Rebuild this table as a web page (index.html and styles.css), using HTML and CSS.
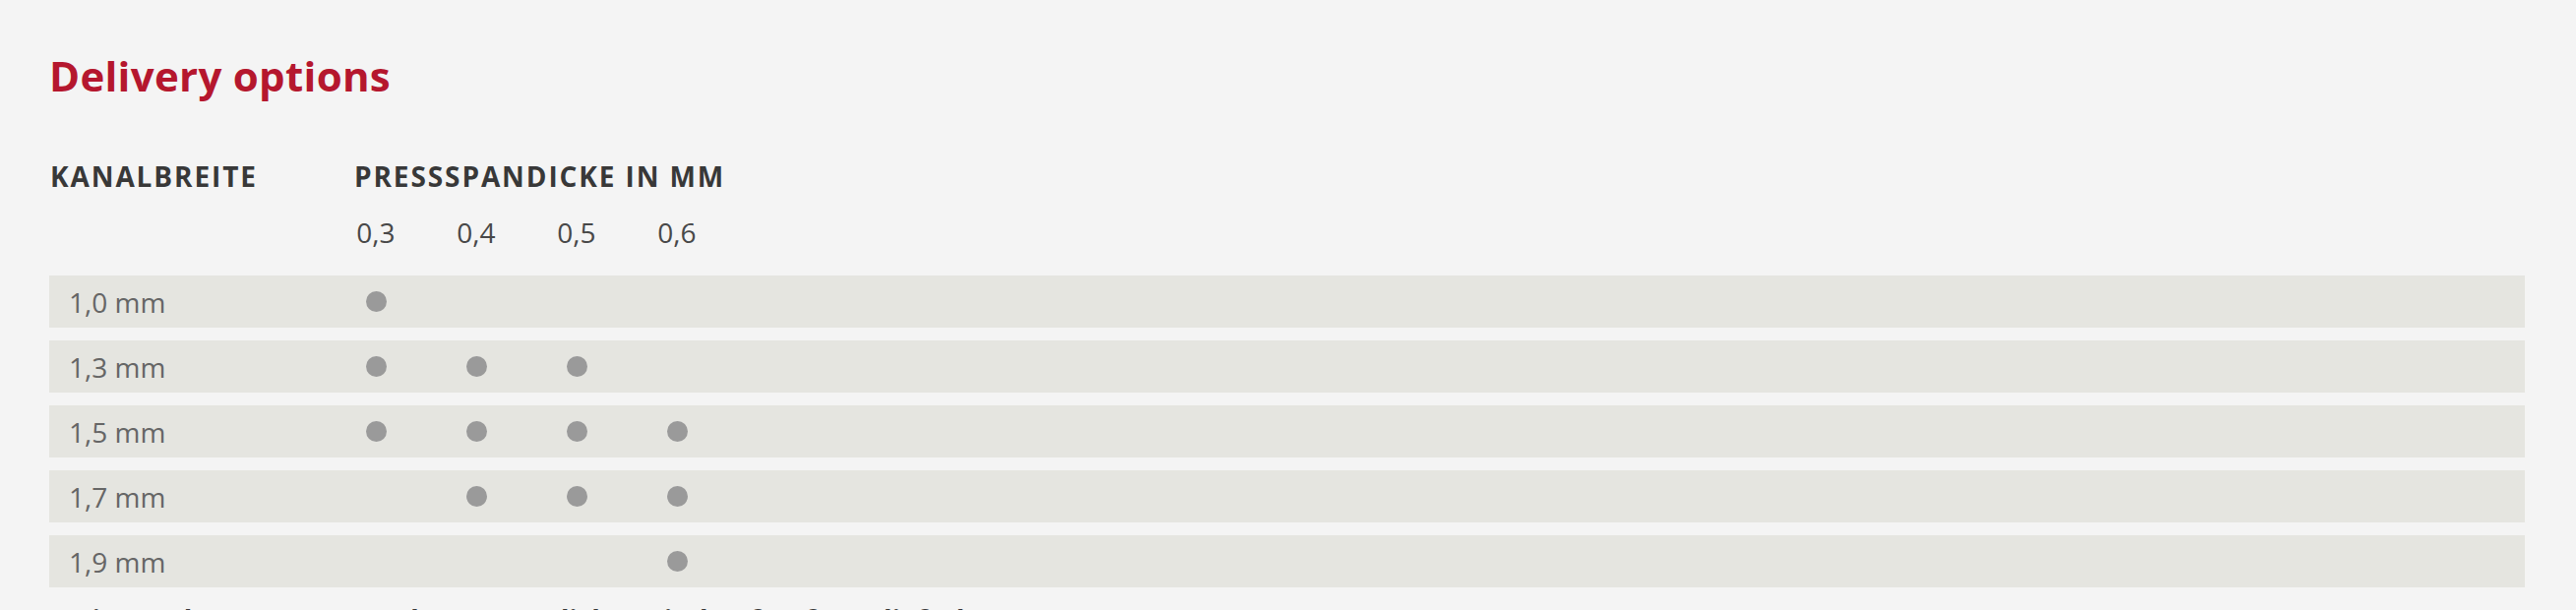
FILE: index.html
```html
<!DOCTYPE html>
<html lang="de">
<head>
<meta charset="utf-8">
<title>Delivery options</title>
<link rel="stylesheet" href="styles.css">
</head>
<body>
<section class="delivery">
  <h2 class="title">Delivery options</h2>
  <div class="grid head-row">
    <div class="head-label">KANALBREITE</div>
    <div class="head-group">PRESSSPANDICKE IN MM</div>
  </div>
  <div class="grid num-row">
    <div></div>
    <div class="num">0,3</div>
    <div class="num">0,4</div>
    <div class="num">0,5</div>
    <div class="num">0,6</div>
  </div>
  <div class="rows">
    <div class="grid row"><div class="label">1,0 mm</div><div class="cell"><span class="dot"></span></div><div class="cell"></div><div class="cell"></div><div class="cell"></div></div>
    <div class="grid row"><div class="label">1,3 mm</div><div class="cell"><span class="dot"></span></div><div class="cell"><span class="dot"></span></div><div class="cell"><span class="dot"></span></div><div class="cell"></div></div>
    <div class="grid row"><div class="label">1,5 mm</div><div class="cell"><span class="dot"></span></div><div class="cell"><span class="dot"></span></div><div class="cell"><span class="dot"></span></div><div class="cell"><span class="dot"></span></div></div>
    <div class="grid row"><div class="label">1,7 mm</div><div class="cell"></div><div class="cell"><span class="dot"></span></div><div class="cell"><span class="dot"></span></div><div class="cell"><span class="dot"></span></div></div>
    <div class="grid row"><div class="label">1,9 mm</div><div class="cell"></div><div class="cell"></div><div class="cell"></div><div class="cell"><span class="dot"></span></div></div>
  </div>
  <p class="note">Weitere Abmessungen und Presspandicken sind auf Anfrage lieferbar.</p>
</section>
</body>
</html>
```

FILE: styles.css
```css
html, body {
  margin: 0;
  padding: 0;
  background: #f4f4f4;
  height: 100%;
  overflow: hidden;
}

.delivery {
  padding: 0 52px 0 50px;
  font-family: "Open Sans", "DejaVu Sans", sans-serif;
}

.title {
  margin: 0;
  padding-top: 52px;
  font-size: 42px;
  line-height: 50px;
  font-weight: 700;
  color: #b5172e;
  letter-spacing: 0.3px;
}

.grid {
  display: grid;
  grid-template-columns: 281px repeat(4, 102px) 1fr;
  align-items: center;
}

.head-row {
  margin-top: 57px;
  font-size: 28px;
  line-height: 40px;
  font-weight: 700;
  color: #383838;
  letter-spacing: 1.9px;
}

.head-label {
  padding-left: 1px;
}

.head-group {
  grid-column: 2 / 7;
  padding-left: 29px;
}

.num-row {
  margin-top: 17px;
  font-size: 28px;
  line-height: 40px;
  color: #484848;
}

.num {
  text-align: center;
}

.rows {
  margin-top: 24px;
  display: flex;
  flex-direction: column;
  gap: 13px;
}

.row {
  height: 53px;
  background: #e5e5e0;
}

.label {
  padding-left: 20px;
  font-size: 28px;
  color: #666666;
}

.cell {
  display: flex;
  justify-content: center;
  align-items: center;
}

.dot {
  width: 21px;
  height: 21px;
  border-radius: 50%;
  background: #9a9a9a;
}

.note {
  margin: 14px 0 0;
  font-size: 28px;
  font-weight: 700;
  color: #383838;
}
```
